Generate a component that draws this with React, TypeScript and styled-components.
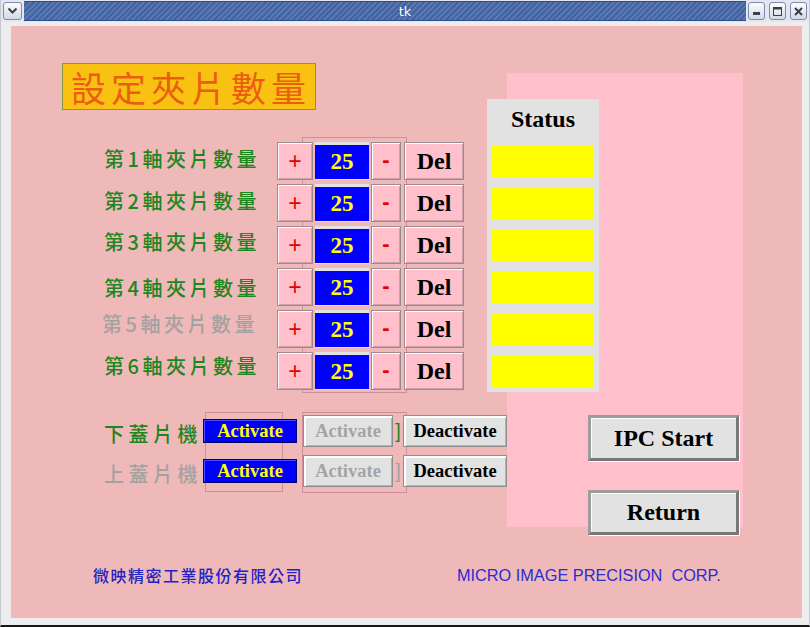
import React from "react";
import styled, { createGlobalStyle } from "styled-components";

const SERIF = `"Liberation Serif", "Noto Sans CJK TC", serif`;
const CJK = `"Noto Sans CJK TC", "Liberation Sans", sans-serif`;
const SANS = `"Liberation Sans", "DejaVu Sans", sans-serif`;

const GlobalStyle = createGlobalStyle`
  html, body { margin: 0; padding: 0; background: #ffffff; }
  body { width: 810px; height: 627px; overflow: hidden; }
`;

const Window = styled.div`
  width: 810px;
  height: 627px;
  box-sizing: border-box;
  display: flex;
  flex-direction: column;
  background: #ededed;
  border-left: 1px solid #c4c8d0;
  border-right: 1px solid #c4c8d0;
  border-bottom: 2px solid #161616;
`;

const TitleBar = styled.div`
  flex: none;
  height: 22px;
  display: flex;
  align-items: center;
  gap: 2px;
  padding: 0 2px;
  background: #e3e7ef;
`;

const WinButton = styled.div<{ $w: number }>`
  flex: none;
  width: ${(p) => p.$w}px;
  height: 18px;
  box-sizing: border-box;
  border: 1px solid #7c8bab;
  border-radius: 3px;
  background: linear-gradient(#fbfcfe, #d3d9e5);
  display: flex;
  align-items: center;
  justify-content: center;
`;

const TitleStripe = styled.div`
  flex: 1;
  height: 20px;
  box-sizing: border-box;
  border-top: 1px solid #2f4c88;
  border-bottom: 1px solid #2f4c88;
  background: repeating-linear-gradient(135deg, #5878b3 0 2px, #44629d 2px 4px);
  display: flex;
  align-items: center;
  justify-content: center;
  padding-left: 40px;
  color: #ffffff;
  font: 13px "DejaVu Sans", sans-serif;
  text-shadow: 0 0 2px #2a4580;
`;

const RightButtons = styled.div`
  display: flex;
  gap: 4px;
`;

const Body = styled.div`
  flex: 1;
  display: flex;
  padding: 4px 7px 7px 10px;
`;

const Content = styled.div`
  width: 791px;
  height: 592px;
  background: #f0b9b9;
  display: flex;
  flex-direction: column;
`;

const Main = styled.div`
  display: flex;
  height: 501px;
  flex: none;
`;

const LeftColumn = styled.div`
  width: 496px;
  flex: none;
  display: flex;
  flex-direction: column;
  align-items: flex-start;
  & > * { flex-shrink: 0; }
`;

const TitleBox = styled.div`
  margin: 37px 0 0 51px;
  width: 254px;
  height: 47px;
  box-sizing: border-box;
  background: #f9c213;
  border: 1px solid #7e9e3a;
  display: flex;
  align-items: center;
  padding-left: 8px;
  color: #ec5d12;
  font-family: ${CJK};
  font-size: 35px;
  line-height: 1;
  letter-spacing: 5px;
`;

const AxisList = styled.div`
  position: relative;
  margin-top: 32px;
  display: flex;
  flex-direction: column;
  gap: 4px;
`;

const FrameOutline = styled.div<{ $l: number; $t: number; $w: number; $h: number }>`
  position: absolute;
  left: ${(p) => p.$l}px;
  top: ${(p) => p.$t}px;
  width: ${(p) => p.$w}px;
  height: ${(p) => p.$h}px;
  box-sizing: border-box;
  border: 1px solid #cf8f98;
  z-index: 0;
`;

const AxisRow = styled.div`
  position: relative;
  z-index: 1;
  height: 38px;
  display: flex;
  align-items: flex-start;
`;

const RowLabel = styled.div<{ $dim?: boolean; $dy: number; $dx: number; $w: number }>`
  margin-left: ${(p) => 93 + p.$dx}px;
  width: ${(p) => p.$w - p.$dx}px;
  margin-top: ${(p) => p.$dy}px;
  color: ${(p) => (p.$dim ? "#a2a2a2" : "#1f861f")};
  font-family: ${CJK};
  font-weight: 500;
  font-size: 20px;
  line-height: 20px;
  letter-spacing: 3.5px;
  white-space: nowrap;
`;

const Controls = styled.div`
  display: flex;
  gap: 2px;
  height: 38px;
`;

const PinkButton = styled.div<{ $w: number; $red?: boolean; $gapLeft?: number }>`
  width: ${(p) => p.$w}px;
  margin-left: ${(p) => p.$gapLeft ?? 0}px;
  height: 38px;
  box-sizing: border-box;
  background: #ffc0cb;
  border: 1px solid #9a8a8e;
  box-shadow: inset 1px 1px 0 #ffffff, inset -1px -1px 0 #c9a3aa;
  display: flex;
  align-items: center;
  justify-content: center;
  color: ${(p) => (p.$red ? "#e40000" : "#000000")};
  font-family: ${(p) => (p.$red ? SANS : SERIF)};
  font-weight: ${(p) => (p.$red ? "normal" : "bold")};
  font-size: ${(p) => (p.$red ? "23px" : "24px")};
`;

const MinusGlyph = styled.span`
  font-weight: bold;
  font-size: 22px;
  margin-top: -2px;
`;

const ValueFrame = styled.div`
  width: 54px;
  height: 38px;
  box-sizing: border-box;
  padding: 3px 0 1px;
  background: #e2e2e2;
  display: flex;
`;

const ValueBox = styled.div`
  flex: 1;
  background: #0000ff;
  color: #ffff00;
  font-family: ${SERIF};
  font-weight: bold;
  font-size: 23px;
  display: flex;
  align-items: center;
  justify-content: center;
`;

const CoverList = styled.div`
  position: relative;
  margin-top: 25px;
  display: flex;
  flex-direction: column;
  gap: 8px;
`;

const CoverRow = styled.div`
  position: relative;
  z-index: 1;
  height: 32px;
  display: flex;
  align-items: center;
`;

const CoverLabel = styled.div<{ $dim?: boolean }>`
  align-self: flex-start;
  margin: 9px 0 0 93px;
  width: 99px;
  color: ${(p) => (p.$dim ? "#a2a2a2" : "#1f861f")};
  font-family: ${CJK};
  font-weight: 500;
  font-size: 20px;
  line-height: 20px;
  letter-spacing: 4.5px;
  white-space: nowrap;
`;

const BlueActivate = styled.div`
  width: 94px;
  height: 24px;
  box-sizing: border-box;
  background: #0000ff;
  border: 1px solid #00006c;
  box-shadow: inset 1px 1px 0 #4a4aff;
  color: #ffff00;
  font-family: ${SERIF};
  font-weight: bold;
  font-size: 18.5px;
  display: flex;
  align-items: center;
  justify-content: center;
`;

const GrayButton = styled.div<{ $w: number; $disabled?: boolean; $ml?: number }>`
  width: ${(p) => p.$w}px;
  height: 32px;
  margin-left: ${(p) => p.$ml ?? 0}px;
  box-sizing: border-box;
  background: #e2e2e2;
  border: 1px solid #8e8e8e;
  box-shadow: inset 2px 2px 0 #ffffff, inset -1px -1px 0 #b2b2b2;
  color: ${(p) => (p.$disabled ? "#a4a4a4" : "#000000")};
  font-family: ${SERIF};
  font-weight: bold;
  font-size: 18.5px;
  display: flex;
  align-items: center;
  justify-content: center;
`;

const Bracket = styled.div<{ $dim?: boolean }>`
  width: 10px;
  color: ${(p) => (p.$dim ? "#a2a2a2" : "#1f861f")};
  font-family: ${SANS};
  font-size: 20px;
  display: flex;
  justify-content: center;
`;

const RightPanel = styled.div`
  width: 236px;
  height: 454px;
  margin-top: 47px;
  background: #ffc0cb;
  display: flex;
  flex-direction: column;
  align-items: flex-start;
  & > * { flex-shrink: 0; }
`;

const StatusPanel = styled.div`
  margin: 26px 0 0 -20px;
  width: 112px;
  height: 293px;
  box-sizing: border-box;
  padding: 0 5px 4px;
  background: #e2e2e2;
  display: flex;
  flex-direction: column;
  gap: 10px;
  & > * { flex-shrink: 0; }
`;

const StatusTitle = styled.div`
  height: 37px;
  box-sizing: border-box;
  padding-top: 8px;
  line-height: 24px;
  text-align: center;
  font-family: ${SERIF};
  font-weight: bold;
  font-size: 24px;
  color: #000;
`;

const StatusCell = styled.div`
  height: 32px;
  background: #ffff00;
`;

const BigButton = styled.div<{ $mt: number; $h: number }>`
  margin: ${(p) => p.$mt}px 0 0 81px;
  width: 151px;
  height: ${(p) => p.$h}px;
  box-sizing: border-box;
  background: #e2e2e2;
  border: 3px solid;
  border-color: #9c9c9c #787878 #787878 #9c9c9c;
  box-shadow: 1px 1px 0 #ffffff, inset 1px 1px 0 #ffffff;
  font-family: ${SERIF};
  font-weight: bold;
  font-size: 24px;
  color: #000;
  display: flex;
  align-items: center;
  justify-content: center;
`;

const Footer = styled.div`
  margin-top: 37px;
  height: 22px;
  display: flex;
  align-items: center;
`;

const CompanyCn = styled.div`
  margin-left: 82px;
  width: 364px;
  color: #2222c4;
  font-family: ${CJK};
  font-weight: 500;
  font-size: 16px;
  letter-spacing: 1.5px;
  white-space: nowrap;
`;

const CompanyEn = styled.div`
  color: #2c2cd0;
  font-family: ${SANS};
  font-size: 16.3px;
  white-space: pre;
`;

const axes = [
  { n: 1, dy: 7, dx: 0, dim: false },
  { n: 2, dy: 7, dx: 0, dim: false },
  { n: 3, dy: 6, dx: 0, dim: false },
  { n: 4, dy: 10, dx: 0, dim: false },
  { n: 5, dy: 4, dx: -2, dim: true },
  { n: 6, dy: 4, dx: 0, dim: false },
];

const covers = [
  { label: "下蓋片機", dim: false },
  { label: "上蓋片機", dim: true },
];

export default function App() {
  return (
    <>
      <GlobalStyle />
      <Window>
        <TitleBar>
          <WinButton $w={19}>
            <svg width="11" height="8" viewBox="0 0 11 8">
              <polyline points="1.5,1.5 5.5,5.5 9.5,1.5" fill="none" stroke="#3a3f4a" strokeWidth="2" />
            </svg>
          </WinButton>
          <TitleStripe>tk</TitleStripe>
          <RightButtons>
            <WinButton $w={17}>
              <svg width="9" height="9" viewBox="0 0 9 9">
                <rect x="1" y="5" width="7" height="3" fill="#3a3f4a" />
              </svg>
            </WinButton>
            <WinButton $w={17}>
              <svg width="9" height="9" viewBox="0 0 9 9">
                <rect x="0.5" y="0.5" width="8" height="8" fill="none" stroke="#3a3f4a" />
                <rect x="0.5" y="0.5" width="8" height="2" fill="#3a3f4a" />
              </svg>
            </WinButton>
            <WinButton $w={17}>
              <svg width="9" height="9" viewBox="0 0 9 9">
                <path d="M1 1 L8 8 M8 1 L1 8" stroke="#3a3f4a" strokeWidth="2" />
              </svg>
            </WinButton>
          </RightButtons>
        </TitleBar>
        <Body>
          <Content>
            <Main>
              <LeftColumn>
                <TitleBox>設定夾片數量</TitleBox>
                <AxisList>
                  <FrameOutline $l={291} $t={-5} $w={105} $h={256} />
                  {axes.map((a) => (
                    <AxisRow key={a.n}>
                      <RowLabel $dim={a.dim} $dy={a.dy} $dx={a.dx} $w={173}>
                        第{a.n}軸夾片數量
                      </RowLabel>
                      <Controls>
                        <PinkButton $w={36} $red>
                          +
                        </PinkButton>
                        <ValueFrame>
                          <ValueBox>25</ValueBox>
                        </ValueFrame>
                        <PinkButton $w={30} $red>
                          <MinusGlyph>-</MinusGlyph>
                        </PinkButton>
                        <PinkButton $w={60} $gapLeft={1}>
                          Del
                        </PinkButton>
                      </Controls>
                    </AxisRow>
                  ))}
                </AxisList>
                <CoverList>
                  <FrameOutline $l={194} $t={-3} $w={78} $h={80} />
                  <FrameOutline $l={291} $t={-3} $w={105} $h={81} />
                  {covers.map((c) => (
                    <CoverRow key={c.label}>
                      <CoverLabel $dim={c.dim}>{c.label}</CoverLabel>
                      <BlueActivate>Activate</BlueActivate>
                      <GrayButton $w={90} $disabled $ml={6}>
                        Activate
                      </GrayButton>
                      <Bracket $dim={c.dim}>]</Bracket>
                      <GrayButton $w={104}>Deactivate</GrayButton>
                    </CoverRow>
                  ))}
                </CoverList>
              </LeftColumn>
              <RightPanel>
                <StatusPanel>
                  <StatusTitle>Status</StatusTitle>
                  {axes.map((a) => (
                    <StatusCell key={a.n} />
                  ))}
                </StatusPanel>
                <BigButton $mt={23} $h={46}>
                  IPC Start
                </BigButton>
                <BigButton $mt={29} $h={45}>
                  Return
                </BigButton>
              </RightPanel>
            </Main>
            <Footer>
              <CompanyCn>微映精密工業股份有限公司</CompanyCn>
              <CompanyEn>MICRO IMAGE PRECISION  CORP.</CompanyEn>
            </Footer>
          </Content>
        </Body>
      </Window>
    </>
  );
}
